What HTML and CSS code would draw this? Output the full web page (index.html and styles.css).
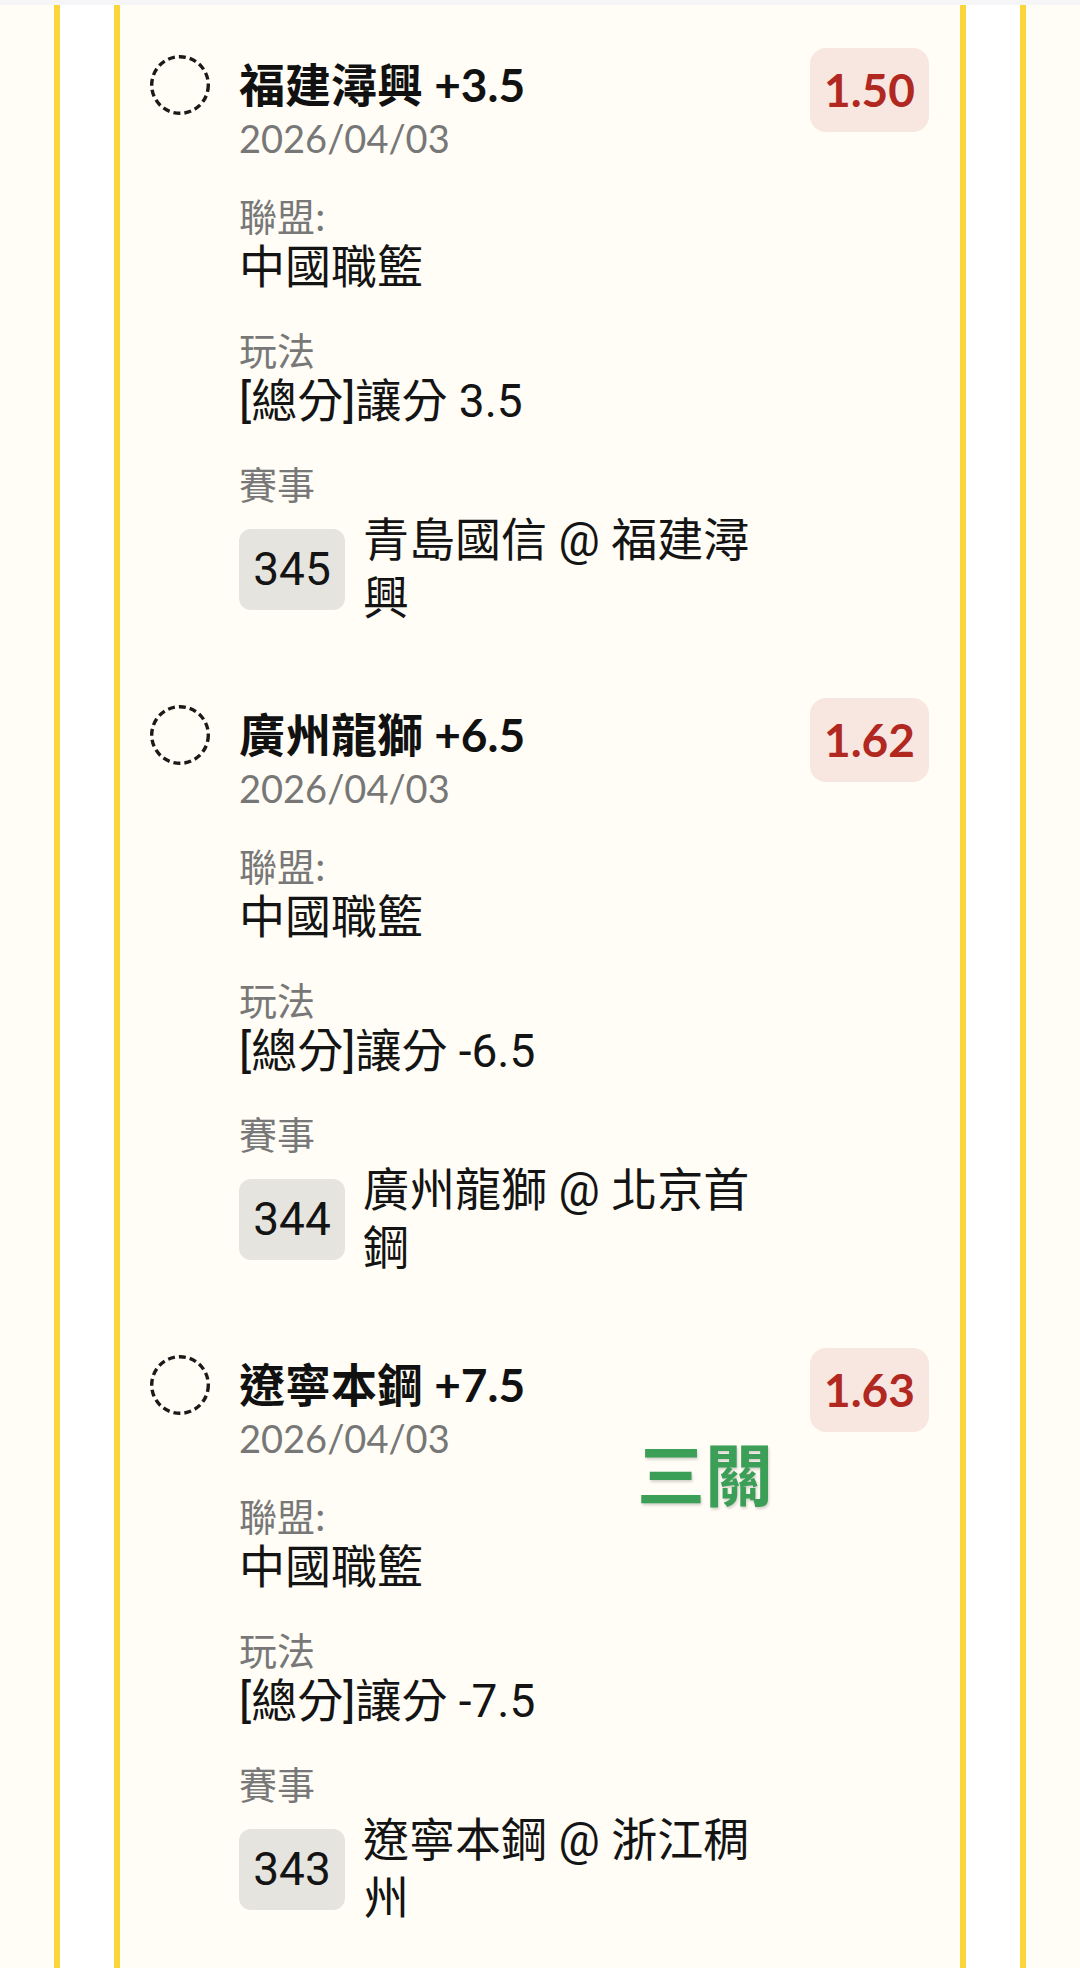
FILE: index.html
```html
<!DOCTYPE html>
<html>
  <head>
    <title>Bet Slip</title>
    <link rel="stylesheet" href="styles.css">
  </head>
  <body>
    <div class="topbar"></div>
    <div class="frame">
      <div class="card">

        <div class="bet">
          <svg class="pick" width="60" height="60" viewBox="0 0 60 60">
            <circle cx="30" cy="30" r="28.3" fill="none" stroke="#1a1a1a" stroke-width="3.4" stroke-dasharray="7 4"/>
          </svg>
          <div class="bet-main">
            <div class="bet-title">福建潯興 +3.5</div>
            <div class="bet-date">2026/04/03</div>
            <div class="field">
              <div class="field-label">聯盟:</div>
              <div class="field-value">中國職籃</div>
            </div>
            <div class="field">
              <div class="field-label">玩法</div>
              <div class="field-value">[總分]讓分 3.5</div>
            </div>
            <div class="field">
              <div class="field-label">賽事</div>
              <div class="match">
                <span class="match-no">345</span>
                <span class="match-name">青島國信 @ 福建潯興</span>
              </div>
            </div>
          </div>
          <div class="odds">1.50</div>
        </div>

        <div class="bet">
          <svg class="pick" width="60" height="60" viewBox="0 0 60 60">
            <circle cx="30" cy="30" r="28.3" fill="none" stroke="#1a1a1a" stroke-width="3.4" stroke-dasharray="7 4"/>
          </svg>
          <div class="bet-main">
            <div class="bet-title">廣州龍獅 +6.5</div>
            <div class="bet-date">2026/04/03</div>
            <div class="field">
              <div class="field-label">聯盟:</div>
              <div class="field-value">中國職籃</div>
            </div>
            <div class="field">
              <div class="field-label">玩法</div>
              <div class="field-value">[總分]讓分 -6.5</div>
            </div>
            <div class="field">
              <div class="field-label">賽事</div>
              <div class="match">
                <span class="match-no">344</span>
                <span class="match-name">廣州龍獅 @ 北京首鋼</span>
              </div>
            </div>
          </div>
          <div class="odds">1.62</div>
        </div>

        <div class="bet">
          <svg class="pick" width="60" height="60" viewBox="0 0 60 60">
            <circle cx="30" cy="30" r="28.3" fill="none" stroke="#1a1a1a" stroke-width="3.4" stroke-dasharray="7 4"/>
          </svg>
          <div class="bet-main">
            <div class="bet-title">遼寧本鋼 +7.5</div>
            <div class="bet-date">2026/04/03</div>
            <div class="field">
              <div class="field-label">聯盟:</div>
              <div class="field-value">中國職籃</div>
            </div>
            <div class="field">
              <div class="field-label">玩法</div>
              <div class="field-value">[總分]讓分 -7.5</div>
            </div>
            <div class="field">
              <div class="field-label">賽事</div>
              <div class="match">
                <span class="match-no">343</span>
                <span class="match-name">遼寧本鋼 @ 浙江稠州</span>
              </div>
            </div>
          </div>
          <div class="odds">1.63</div>
          <div class="stamp">三關</div>
        </div>

      </div>
    </div>
  </body>
</html>
```

FILE: styles.css
```css
body {
  margin: 0;
  background-color: #fffdf5;
  font-family: Roboto, "Noto Sans CJK TC", sans-serif;
  color: #141414;
}
.topbar {
  height: 5px;
  background-color: #f6f6f8;
}
.frame {
  margin: 0 54px;
  border-left: 6px solid #fad53c;
  border-right: 6px solid #fad53c;
  background-color: #ffffff;
}
.card {
  margin: 0 54px;
  border-left: 6px solid #fad53c;
  border-right: 6px solid #fad53c;
  background-color: #fffdf5;
  padding: 43px 31px 71px 30px;
}
.bet {
  position: relative;
  display: flex;
  align-items: flex-start;
  margin-bottom: 71px;
}
.pick {
  flex: none;
  margin-top: 7px;
}
.bet-main {
  flex: 1;
  margin-left: 29px;
  padding-top: 10px;
}
.bet-title {
  font-family: Lato, "Noto Sans CJK TC", sans-serif;
  font-weight: bold;
  font-size: 46px;
  line-height: 54px;
  color: #111;
}
.bet-date {
  font-family: Lato, sans-serif;
  font-size: 38px;
  line-height: 52px;
  color: #777;
}
.field {
  margin-top: 30px;
}
.bet-date + .field {
  margin-top: 26px;
}
.field-label {
  font-family: "Noto Sans CJK TC", sans-serif;
  font-size: 38px;
  line-height: 50px;
  color: #787878;
}
.field-value {
  font-size: 46px;
  line-height: 54px;
}
.match {
  display: flex;
  align-items: center;
  margin-top: 3px;
}
.match-no {
  flex: none;
  width: 106px;
  height: 81px;
  line-height: 81px;
  text-align: center;
  font-size: 46px;
  background-color: #e6e4df;
  border-radius: 12px;
}
.match-name {
  margin-left: 18px;
  font-size: 46px;
  line-height: 58px;
}
.odds {
  flex: none;
  margin-left: 30px;
  width: 119px;
  height: 84px;
  line-height: 84px;
  text-align: center;
  font-family: Lato, sans-serif;
  font-weight: bold;
  font-size: 46px;
  color: #b0281f;
  background-color: #f8e7e1;
  border-radius: 16px;
}
.stamp {
  position: absolute;
  left: 487px;
  top: 90px;
  font-family: "Noto Sans CJK TC", sans-serif;
  font-weight: bold;
  font-size: 68px;
  line-height: 68px;
  color: #3c9f58;
  text-shadow: 1px 2px 3px rgba(0, 0, 0, 0.18);
}
```
